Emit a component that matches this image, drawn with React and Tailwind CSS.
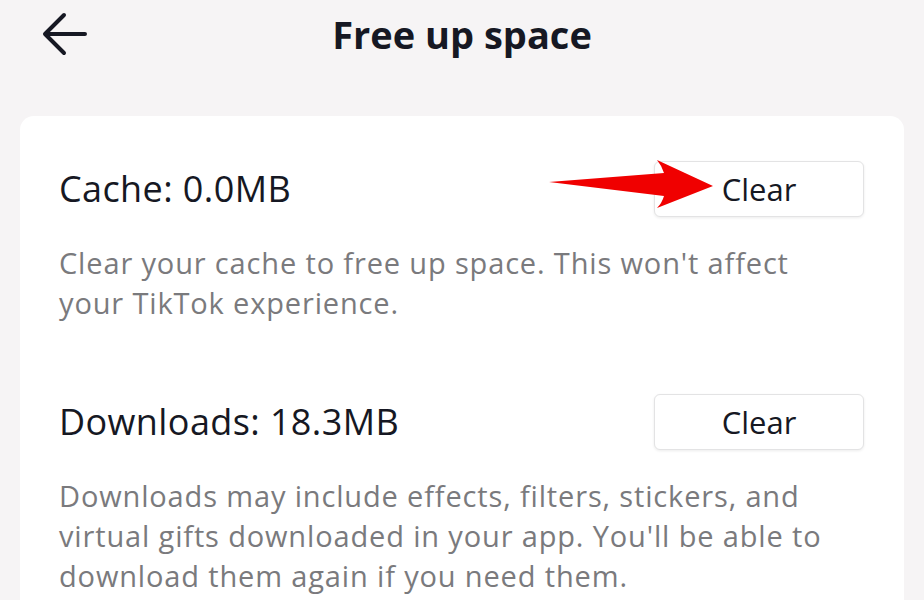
function Section({ label, text }) {
  return (
    <div>
      <div className="flex items-center justify-between">
        <p className="text-[36px] font-medium leading-none tracking-[0.4px] text-[#161823]">{label}</p>
        <button className="h-[56px] w-[210px] rounded-[6px] border border-[#e3e3e4] bg-white text-[31px] leading-none text-[#161823] shadow-[0_1px_3px_rgba(0,0,0,0.08)]">
          Clear
        </button>
      </div>
      <p className="mt-[26px] pr-[24px] text-[29px] leading-[40px] tracking-[0.85px] text-[#7a7a7d]">{text}</p>
    </div>
  );
}

export default function App() {
  return (
    <div
      className="relative h-[600px] w-[924px] overflow-hidden bg-[#f6f4f5]"
      style={{ fontFamily: "'Open Sans', sans-serif" }}
    >
      <header className="relative flex h-[68px] items-center justify-center">
        <svg className="absolute left-0 top-0" width="100" height="68">
          <path
            d="M85 34 H46 M64 15 L45 34 L64 53"
            fill="none"
            stroke="#161823"
            strokeWidth="4"
            strokeLinecap="round"
            strokeLinejoin="round"
          />
        </svg>
        <h1 className="text-[38px] font-bold text-[#161823]">Free up space</h1>
      </header>
      <div className="mx-[20px] mt-[48px] flex flex-col gap-[71px] rounded-[14px] bg-white pl-[39px] pr-[40px] pt-[45px] pb-[40px]">
        <Section
          label="Cache: 0.0MB"
          text="Clear your cache to free up space. This won't affect your TikTok experience."
        />
        <Section
          label="Downloads: 18.3MB"
          text="Downloads may include effects, filters, stickers, and virtual gifts downloaded in your app. You'll be able to download them again if you need them."
        />
      </div>
      <svg className="absolute left-0 top-0" width="924" height="600">
        <path
          d="M549 182 L664 173 Q662 166 657 160 L713 186 L657 208 Q662 203 664 196 Z"
          fill="#f00000"
        />
      </svg>
    </div>
  );
}
